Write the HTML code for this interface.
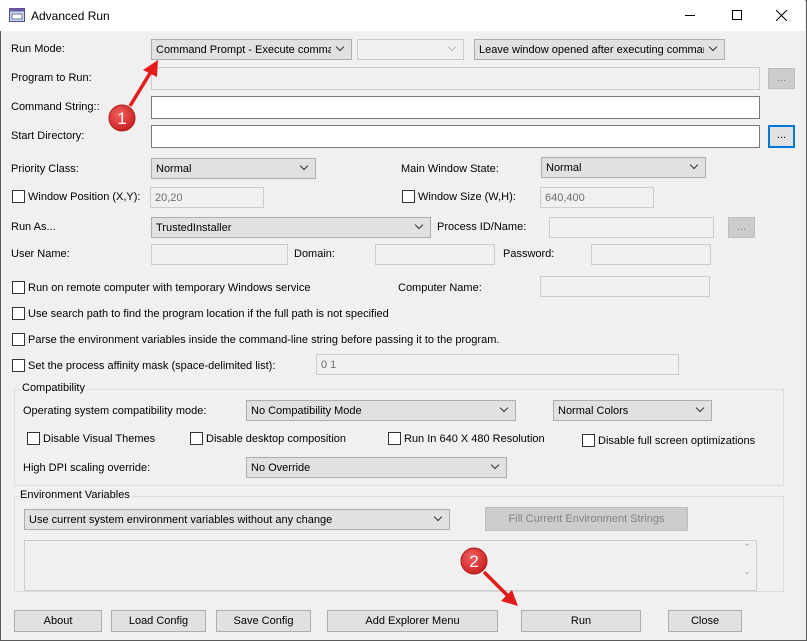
<!DOCTYPE html>
<html><head><meta charset="utf-8"><style>
*{box-sizing:border-box;margin:0;padding:0}
body{width:807px;height:641px;overflow:hidden;background:#f0f0f0;font-family:"Liberation Sans",sans-serif;font-size:11px;color:#000;position:relative}
#win{position:absolute;left:0;top:0;width:807px;height:641px;border:1px solid #5a5a5a;border-top:1px solid #777}
#title{position:absolute;left:0;top:0;width:805px;height:31px;background:#fff}
.a{position:absolute;white-space:nowrap}
.t{position:absolute;white-space:nowrap;line-height:14px}
.cb{position:absolute;height:21px;background:#e1e1e1;border:1px solid #adadad;padding:4px 20px 0 4px;overflow:hidden;white-space:nowrap;line-height:13px}
.cb span{display:block;overflow:hidden}
.cb::after{content:"";position:absolute;right:8px;top:4px;width:5px;height:5px;border-right:1px solid #333;border-bottom:1px solid #333;transform:rotate(45deg)}
.cb.d{background:#f0f0f0;border-color:#ccc}
.cb.d::after{border-color:#bbb}
.in{position:absolute;height:21px;background:#fff;border:1px solid #7a7a7a;padding:4px 0 0 4px;color:#6d6d6d;white-space:nowrap;line-height:13px}
.in.d{background:#f0f0f0;border-color:#ccc}
.btn{position:absolute;height:22px;background:#e1e1e1;border:1px solid #adadad;text-align:center;line-height:20px}
.btn.d{background:#ccc;border-color:#bfbfbf;color:#838383}
.ck{position:absolute;width:13px;height:13px;border:1px solid #333;background:#fff}
.grp{position:absolute;border:1px solid #dcdcdc}
.gl{position:absolute;background:#f0f0f0;padding:0 2px;white-space:nowrap}
</style></head><body>
<div id="win"></div>
<div id="title">
<svg class="a" style="left:9px;top:8px" width="16" height="14" viewBox="0 0 16 14"><rect x="0.5" y="0.5" width="15" height="13" fill="#c8d8f0" stroke="#5a4a8a"/><rect x="0.5" y="0.5" width="15" height="3" fill="#6a5aa0"/><rect x="3" y="6" width="10" height="5" fill="#fff" stroke="#6a7a9a"/></svg>
<div class="t" style="left:31px;top:9px;font-size:12px">Advanced Run</div>
<div class="a" style="left:685px;top:15px;width:10px;height:1px;background:#000"></div>
<div class="a" style="left:732px;top:10px;width:10px;height:10px;border:1px solid #000"></div>
<svg class="a" style="left:776px;top:10px" width="11" height="11"><path d="M0 0L11 11M11 0L0 11" stroke="#000" stroke-width="1"/></svg>
</div>

<div class="t" style="left:11px;top:42px">Run Mode:</div>
<div class="cb" style="left:151px;top:39px;width:201px"><span>Command Prompt - Execute command</span></div>
<div class="cb d" style="left:357px;top:39px;width:107px"></div>
<div class="cb" style="left:474px;top:39px;width:251px"><span>Leave window opened after executing command</span></div>

<div class="t" style="left:11px;top:71px">Program to Run:</div>
<div class="in d" style="left:151px;top:67px;width:609px;height:23px"></div>
<div class="btn d" style="left:768px;top:68px;width:27px;height:21px;background:#ccc;line-height:18px">...</div>

<div class="t" style="left:11px;top:100px">Command String::</div>
<div class="in" style="left:151px;top:96px;width:609px;height:23px"></div>

<div class="t" style="left:11px;top:129px">Start Directory:</div>
<div class="in" style="left:151px;top:125px;width:609px;height:23px"></div>
<div class="btn" style="left:768px;top:125px;width:27px;height:23px;border:2px solid #0078d7;line-height:17px">...</div>

<div class="t" style="left:11px;top:162px">Priority Class:</div>
<div class="cb" style="left:151px;top:158px;width:165px"><span>Normal</span></div>
<div class="t" style="left:401px;top:162px">Main Window State:</div>
<div class="cb" style="left:541px;top:157px;width:165px"><span>Normal</span></div>

<div class="ck" style="left:12px;top:190px"></div>
<div class="t" style="left:28px;top:190px">Window Position (X,Y):</div>
<div class="in d" style="left:150px;top:187px;width:114px">20,20</div>
<div class="ck" style="left:402px;top:190px"></div>
<div class="t" style="left:418px;top:190px">Window Size (W,H):</div>
<div class="in d" style="left:540px;top:187px;width:114px">640,400</div>

<div class="t" style="left:11px;top:220px">Run As...</div>
<div class="cb" style="left:151px;top:217px;width:280px"><span>TrustedInstaller</span></div>
<div class="t" style="left:437px;top:220px">Process ID/Name:</div>
<div class="in d" style="left:549px;top:217px;width:165px"></div>
<div class="btn d" style="left:728px;top:217px;width:27px;height:21px;line-height:18px">...</div>

<div class="t" style="left:11px;top:247px">User Name:</div>
<div class="in d" style="left:151px;top:244px;width:137px"></div>
<div class="t" style="left:294px;top:247px">Domain:</div>
<div class="in d" style="left:375px;top:244px;width:120px"></div>
<div class="t" style="left:503px;top:247px">Password:</div>
<div class="in d" style="left:591px;top:244px;width:120px"></div>

<div class="ck" style="left:12px;top:281px"></div>
<div class="t" style="left:28px;top:281px">Run on remote computer with temporary Windows service</div>
<div class="t" style="left:398px;top:281px">Computer Name:</div>
<div class="in d" style="left:540px;top:276px;width:170px"></div>

<div class="ck" style="left:12px;top:307px"></div>
<div class="t" style="left:28px;top:307px">Use search path to find the program location if the full path is not specified</div>
<div class="ck" style="left:12px;top:333px"></div>
<div class="t" style="left:28px;top:333px">Parse the environment variables inside the command-line string before passing it to the program.</div>
<div class="ck" style="left:12px;top:359px"></div>
<div class="t" style="left:28px;top:359px">Set the process affinity mask (space-delimited list):</div>
<div class="in d" style="left:316px;top:354px;width:363px">0 1</div>

<div class="grp" style="left:14px;top:389px;width:770px;height:97px"></div>
<div class="gl" style="left:20px;top:382px">Compatibility</div>
<div class="t" style="left:23px;top:404px">Operating system compatibility mode:</div>
<div class="cb" style="left:246px;top:400px;width:270px"><span>No Compatibility Mode</span></div>
<div class="cb" style="left:553px;top:400px;width:159px"><span>Normal Colors</span></div>
<div class="ck" style="left:27px;top:432px"></div>
<div class="t" style="left:43px;top:432px">Disable Visual Themes</div>
<div class="ck" style="left:190px;top:432px"></div>
<div class="t" style="left:206px;top:432px">Disable desktop composition</div>
<div class="ck" style="left:388px;top:432px"></div>
<div class="t" style="left:404px;top:432px">Run In 640 X 480 Resolution</div>
<div class="ck" style="left:582px;top:434px"></div>
<div class="t" style="left:598px;top:434px">Disable full screen optimizations</div>
<div class="t" style="left:23px;top:461px">High DPI scaling override:</div>
<div class="cb" style="left:246px;top:457px;width:261px"><span>No Override</span></div>

<div class="grp" style="left:14px;top:496px;width:770px;height:96px"></div>
<div class="gl" style="left:18px;top:489px">Environment Variables</div>
<div class="cb" style="left:24px;top:509px;width:426px"><span>Use current system environment variables without any change</span></div>
<div class="btn d" style="left:485px;top:507px;width:203px;height:24px;line-height:22px">Fill Current Environment Strings</div>
<div class="in d" style="left:24px;top:540px;width:733px;height:51px;border-color:#ccc"></div>
<div class="a" style="left:738px;top:541px;width:18px;height:49px;background:#f0f0f0;color:#aaa;font-size:9px;text-align:center;line-height:12px">⌃<br><br>⌄</div>

<div class="btn" style="left:14px;top:610px;width:88px">About</div>
<div class="btn" style="left:111px;top:610px;width:95px">Load Config</div>
<div class="btn" style="left:216px;top:610px;width:95px">Save Config</div>
<div class="btn" style="left:327px;top:610px;width:171px">Add Explorer Menu</div>
<div class="btn" style="left:521px;top:610px;width:120px">Run</div>
<div class="btn" style="left:668px;top:610px;width:74px">Close</div>

<svg class="a" style="left:0;top:0" width="807" height="641">
<defs><radialGradient id="g" cx="0.4" cy="0.35" r="0.7"><stop offset="0" stop-color="#f26060"/><stop offset="1" stop-color="#c81e1e"/></radialGradient></defs>
<path d="M130 106L152 70" stroke="#e41b1b" stroke-width="3.5"/>
<path d="M158 60L143 70L157 77Z" fill="#e41b1b"/>
<circle cx="122" cy="118" r="13" fill="url(#g)" stroke="#b01818"/>
<text x="122" y="124" text-anchor="middle" fill="#fff" font-family="Liberation Sans" font-size="17">1</text>
<path d="M484 572L508 596" stroke="#e41b1b" stroke-width="3.5"/>
<path d="M518 606L501 601L512 590Z" fill="#e41b1b"/>
<circle cx="474" cy="561" r="13" fill="url(#g)" stroke="#b01818"/>
<text x="474" y="567" text-anchor="middle" fill="#fff" font-family="Liberation Sans" font-size="17">2</text>
</svg>
</body></html>
